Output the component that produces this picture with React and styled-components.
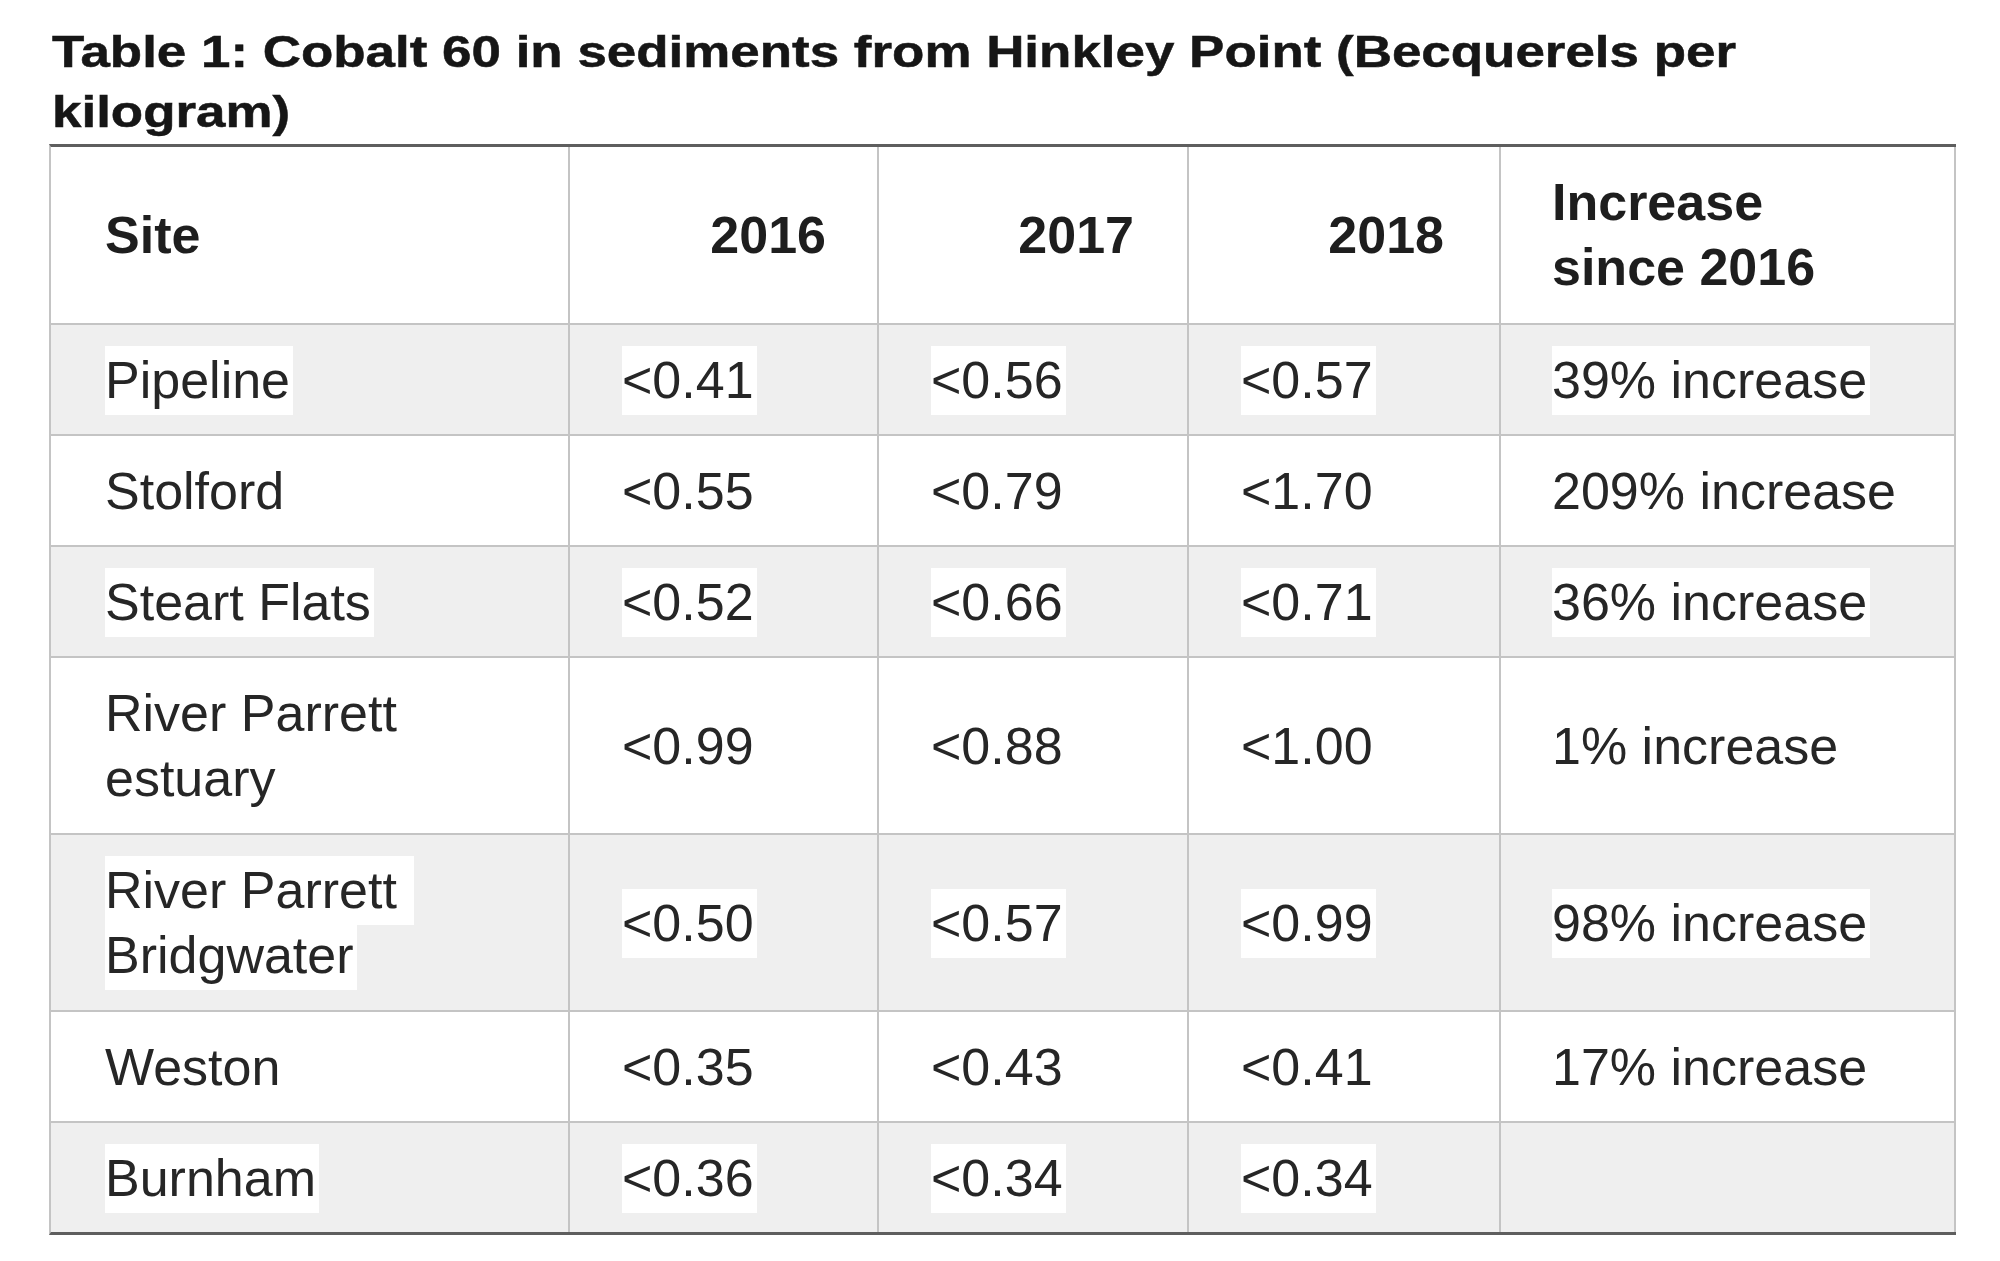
import React from "react";
import styled, { createGlobalStyle } from "styled-components";

const GlobalStyle = createGlobalStyle`
  html, body {
    margin: 0;
    padding: 0;
    background: #ffffff;
  }
  body {
    font-family: "Liberation Sans", Arial, Helvetica, sans-serif;
    color: #222;
  }
`;

const Page = styled.div`
  width: 2000px;
  height: 1261px;
  box-sizing: border-box;
  padding: 22px 0 0 49px;
  overflow: hidden;
`;

// the caption in the screenshot is drawn wider than the body type
const Caption = styled.h3`
  margin: 0 0 2px 3px;
  font-size: 45px;
  line-height: 60px;
  font-weight: 700;
  color: #161616;
  white-space: nowrap;
  -webkit-text-stroke: 0.5px #161616;
  transform: scaleX(1.176);
  transform-origin: left top;
`;

const Grid = styled.div`
  display: grid;
  grid-template-columns: 519px 309px 310px 312px 455px;
  width: max-content;
  border-top: 3px solid #5e5e5e;
  border-bottom: 3px solid #5e5e5e;
  border-left: 2px solid #c4c4c4;
`;

const Cell = styled.div`
  box-sizing: border-box;
  display: flex;
  flex-direction: column;
  justify-content: center;
  align-items: ${(p) => (p.$right ? "flex-end" : "flex-start")};
  padding: ${(p) => p.$top}px ${(p) => p.$pr}px ${(p) => p.$bottom}px ${(p) => p.$pl}px;
  border-right: 2px solid #c4c4c4;
  border-bottom: ${(p) => (p.$last ? "none" : "2px solid #c4c4c4")};
  background: ${(p) => (p.$shade ? "#efefef" : "#ffffff")};
  font-size: 52px;
  line-height: 65px;
  font-weight: ${(p) => (p.$head ? 700 : 400)};
  color: ${(p) => (p.$head ? "#1e1e1e" : "#262626")};
`;

const Mark = styled.span`
  white-space: pre;
  padding: 2px 3px 2px 0;
  margin: -2px 0;
  background: ${(p) => (p.$on ? "#ffffff" : "transparent")};
`;

// left padding per column, right padding for the right aligned year heads
const padLeft = [54, 52, 52, 52, 51];
const padRight = [50, 48, 50, 52, 50];

const heads = [
  { lines: ["Site"] },
  { lines: ["2016"], right: true },
  { lines: ["2017"], right: true },
  { lines: ["2018"], right: true },
  { lines: ["Increase", "since 2016"] },
];

const rows = [
  [["Pipeline"], ["<0.41"], ["<0.56"], ["<0.57"], ["39% increase"]],
  [["Stolford"], ["<0.55"], ["<0.79"], ["<1.70"], ["209% increase"]],
  [["Steart Flats"], ["<0.52"], ["<0.66"], ["<0.71"], ["36% increase"]],
  [["River Parrett", "estuary"], ["<0.99"], ["<0.88"], ["<1.00"], ["1% increase"]],
  [["River Parrett\u00a0", "Bridgwater"], ["<0.50"], ["<0.57"], ["<0.99"], ["98% increase"]],
  [["Weston"], ["<0.35"], ["<0.43"], ["<0.41"], ["17% increase"]],
  [["Burnham"], ["<0.36"], ["<0.34"], ["<0.34"], []],
];

export default function App() {
  return (
    <Page>
      <GlobalStyle />
      <Caption>
        Table 1: Cobalt 60 in sediments from Hinkley Point (Becquerels per
        <br />
        kilogram)
      </Caption>
      <Grid>
        {heads.map((h, i) => (
          <Cell
            key={"h" + i}
            $head
            $right={h.right}
            $pl={padLeft[i]}
            $pr={padRight[i]}
            $top={23}
            $bottom={23}
          >
            {h.lines.map((l) => (
              <Mark key={l}>{l}</Mark>
            ))}
          </Cell>
        ))}
        {rows.map((row, r) => {
          const shade = r % 2 === 0;
          const tall = row[0].length > 1;
          return row.map((cell, c) => (
            <Cell
              key={r + "-" + c}
              $shade={shade}
              $last={r === rows.length - 1}
              $pl={padLeft[c]}
              $pr={50}
              $top={23}
              $bottom={tall ? 22 : 21}
            >
              {cell.map((l) => (
                <Mark key={l} $on={shade}>
                  {l}
                </Mark>
              ))}
            </Cell>
          ));
        })}
      </Grid>
    </Page>
  );
}
